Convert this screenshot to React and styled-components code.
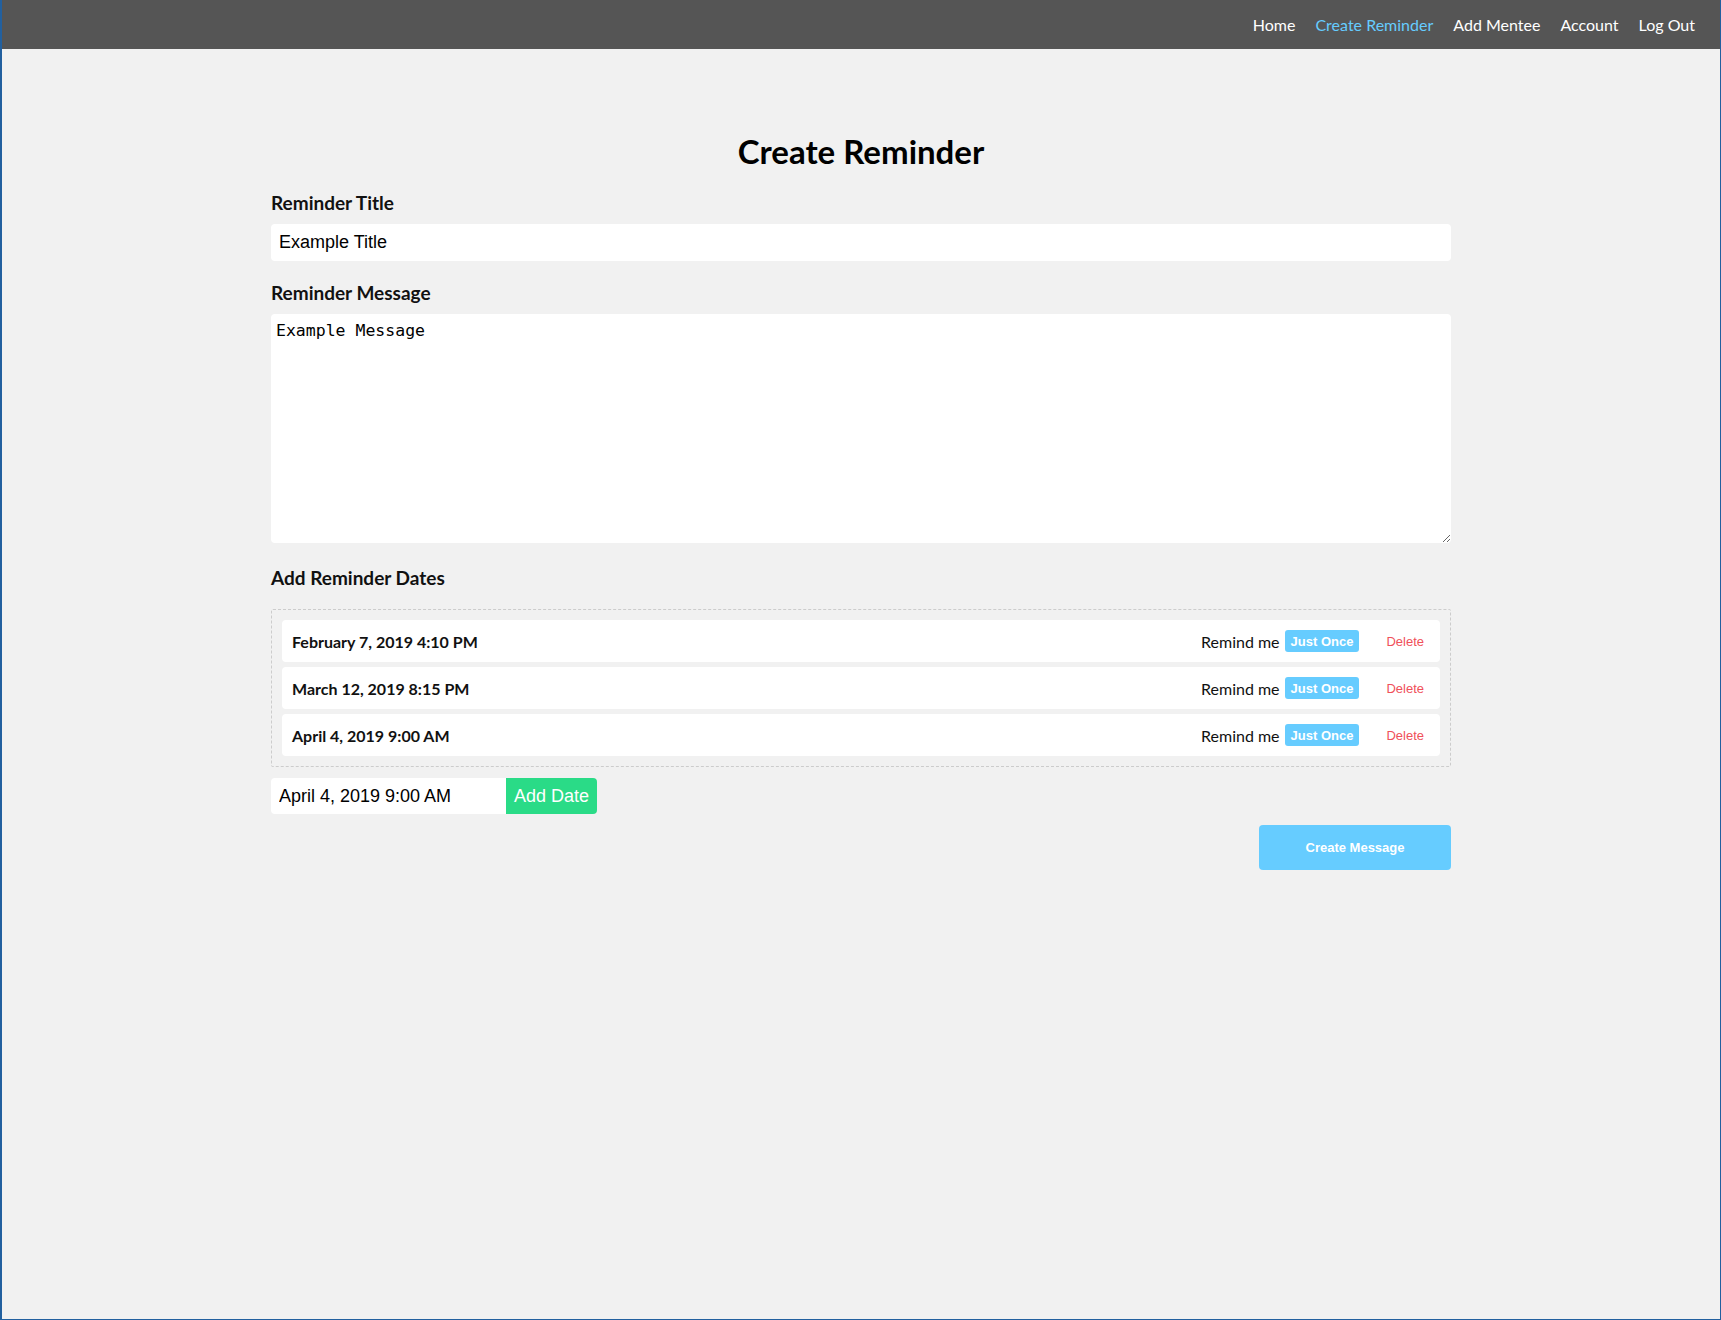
import React from "react";
import styled, { createGlobalStyle } from "styled-components";

const GlobalStyle = createGlobalStyle`
  html, body { margin: 0; padding: 0; }
  body {
    background: #f1f1f1;
    font-family: Lato, "Open Sans", sans-serif;
    color: #111;
    min-height: 100vh;
    box-sizing: border-box;
    border-left: 2px solid #22609f;
    border-right: 1px solid #22609f;
    border-bottom: 1px solid #22609f;
  }
  * { box-sizing: border-box; }
`;

const NavBar = styled.nav`
  height: 49px;
  background: #555555;
  display: flex;
  justify-content: flex-end;
  align-items: center;
  padding-right: 15px;
`;

const NavLink = styled.a`
  font-family: Lato, sans-serif;
  font-size: 16px;
  padding: 0 10px;
  color: ${(p) => (p.$active ? "#66ccff" : "#ffffff")};
  text-decoration: none;
  cursor: pointer;
`;

const Main = styled.main`
  width: 1180px;
  margin: 0 auto;
  padding-top: 83px;
  display: flex;
  flex-direction: column;
`;

const Title = styled.h1`
  margin: 0;
  font-size: 33px;
  line-height: 38px;
  font-weight: 700;
  text-align: center;
  color: #000;
`;

const Label = styled.label`
  display: block;
  font-size: 19px;
  font-weight: 700;
  line-height: 22px;
  margin-top: ${(p) => p.$top}px;
  margin-bottom: ${(p) => p.$bottom}px;
  color: #111;
`;

const TextInput = styled.input`
  display: block;
  width: 100%;
  height: 37px;
  border: none;
  outline: none;
  border-radius: 4px;
  background: #fff;
  padding: 0 8px;
  font-family: "Liberation Sans", Arial, sans-serif;
  font-size: 18px;
  color: #000;
`;

const TextArea = styled.textarea`
  display: block;
  width: 100%;
  height: 229px;
  border: none;
  outline: none;
  border-radius: 4px;
  background: #fff;
  padding: 7px 5px;
  font-family: "DejaVu Sans Mono", monospace;
  font-size: 16.5px;
  color: #000;
  resize: vertical;
`;

const DateBox = styled.div`
  border: 1px dashed #cccccc;
  border-radius: 2px;
  padding: 10px;
  display: flex;
  flex-direction: column;
  gap: 5px;
`;

const DateRow = styled.div`
  height: 42px;
  background: #fff;
  border-radius: 4px;
  display: flex;
  align-items: center;
  padding-left: 10px;
`;

const DateText = styled.span`
  flex: 1;
  font-size: 16px;
  font-weight: 700;
  color: #111;
`;

const RemindText = styled.span`
  font-size: 16px;
  color: #111;
  margin-right: 5px;
`;

const Badge = styled.span`
  display: inline-flex;
  align-items: center;
  height: 22px;
  padding: 0 6px;
  border-radius: 3px;
  background: #66ccff;
  color: #fff;
  font-family: "Liberation Sans", Arial, sans-serif;
  font-weight: 700;
  font-size: 13px;
`;

const DeleteButton = styled.button`
  border: none;
  background: transparent;
  color: #f0505a;
  font-family: "Liberation Sans", Arial, sans-serif;
  font-size: 13px;
  padding: 0 16px;
  margin-left: 11px;
  height: 30px;
  cursor: pointer;
`;

const AddRow = styled.div`
  display: flex;
  margin-top: 11px;
`;

const DateInput = styled.input`
  width: 235px;
  height: 36px;
  border: none;
  outline: none;
  background: #fff;
  border-radius: 4px 0 0 4px;
  padding: 0 8px;
  font-family: "Liberation Sans", Arial, sans-serif;
  font-size: 18px;
  color: #000;
`;

const AddButton = styled.button`
  height: 36px;
  border: none;
  background: #2adb87;
  color: #fff;
  border-radius: 0 4px 4px 0;
  padding: 0 8px;
  font-family: "Liberation Sans", Arial, sans-serif;
  font-size: 18px;
  cursor: pointer;
`;

const SubmitButton = styled.button`
  align-self: flex-end;
  margin-top: 11px;
  width: 192px;
  height: 45px;
  border: none;
  border-radius: 4px;
  background: #66ccff;
  color: #fff;
  font-family: "Liberation Sans", Arial, sans-serif;
  font-weight: 700;
  font-size: 13px;
  cursor: pointer;
`;

const dates = [
  "February 7, 2019 4:10 PM",
  "March 12, 2019 8:15 PM",
  "April 4, 2019 9:00 AM",
];

export default function App() {
  return (
    <>
      <GlobalStyle />
      <NavBar>
        <NavLink>Home</NavLink>
        <NavLink $active>Create Reminder</NavLink>
        <NavLink>Add Mentee</NavLink>
        <NavLink>Account</NavLink>
        <NavLink>Log Out</NavLink>
      </NavBar>
      <Main>
        <Title>Create Reminder</Title>
        <Label $top={22} $bottom={10}>Reminder Title</Label>
        <TextInput defaultValue="Example Title" />
        <Label $top={21} $bottom={10}>Reminder Message</Label>
        <TextArea defaultValue="Example Message" />
        <Label $top={24} $bottom={20}>Add Reminder Dates</Label>
        <DateBox>
          {dates.map((d) => (
            <DateRow key={d}>
              <DateText>{d}</DateText>
              <RemindText>Remind me</RemindText>
              <Badge>Just Once</Badge>
              <DeleteButton>Delete</DeleteButton>
            </DateRow>
          ))}
        </DateBox>
        <AddRow>
          <DateInput defaultValue="April 4, 2019 9:00 AM" />
          <AddButton>Add Date</AddButton>
        </AddRow>
        <SubmitButton>Create Message</SubmitButton>
      </Main>
    </>
  );
}
